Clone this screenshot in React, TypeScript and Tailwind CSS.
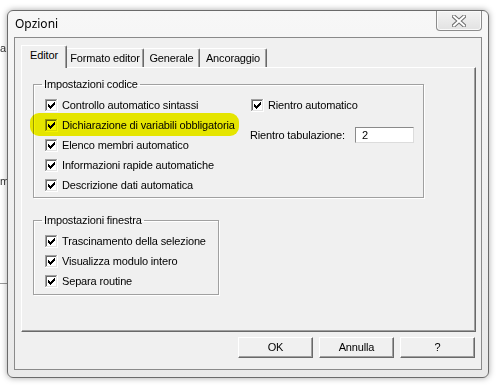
import React from "react"

const ui = "font-['Liberation_Sans',Arial,sans-serif] text-[11px] leading-[13px] tracking-[-0.15px] text-black"

// classic sunken checkbox, always ticked
function Check() {
  const starts = [2, 3, 4, 3, 2, 1, 0]
  return (
    <svg width="13" height="13" viewBox="0 0 13 13" className="shrink-0">
      <rect x="0" y="0" width="13" height="13" fill="#fff" />
      <path d="M0 0h12v1H1v11H0z" fill="#a0a0a0" />
      <path d="M1 1h10v1H2v9H1z" fill="#696969" />
      <path d="M11 1h1v11H1v-1h10z" fill="#e3e3e3" />
      <path d="M12 0h1v13H0v-1h12z" fill="#fff" />
      {starts.map((s, c) => (
        <rect key={c} x={3 + c} y={3 + s} width="1" height="3" fill="#000" />
      ))}
    </svg>
  )
}

function CheckRow({ label, mark }: { label: string; mark?: boolean }) {
  return (
    <div className="relative flex items-center gap-[4px] h-[20px]">
      <Check />
      <span className="whitespace-nowrap">{label}</span>
      {mark && (
        <span className="pointer-events-none absolute -left-[15px] -top-[2px] w-[209px] h-[23px] rounded-[9px] bg-[#f4f400] mix-blend-multiply" />
      )}
    </div>
  )
}

function Group({ title, className, children }: { title: string; className?: string; children: React.ReactNode }) {
  return (
    <fieldset
      className={`border border-[#a0a0a0] shadow-[inset_1px_1px_0_#fff,1px_1px_0_#fff] pl-[11px] ${className ?? ""}`}
    >
      <legend className="ml-[-3px] px-[2px]">{title}</legend>
      {children}
    </fieldset>
  )
}

function Button({ children }: { children: React.ReactNode }) {
  return (
    <div className="w-[75px] h-[21px] flex items-center justify-center bg-[#f0f0f0] border-t border-l border-t-white border-l-white border-r border-b border-r-[#696969] border-b-[#696969] shadow-[inset_-1px_-1px_0_#a0a0a0]">
      {children}
    </div>
  )
}

function Tab({ label, width, active }: { label: string; width: string; active?: boolean }) {
  if (active) {
    return (
      <div
        className={`${width} relative z-10 -mb-[1px] h-[23px] pb-[3px] flex items-center justify-center bg-[#f0f0f0] border-t border-l border-t-white border-l-white border-r border-r-[#696969] shadow-[inset_-1px_0_0_#a0a0a0] rounded-tr-[2px]`}
      >
        {label}
      </div>
    )
  }
  return (
    <div
      className={`${width} h-[19px] flex items-center justify-center bg-[#f0f0f0] border-t border-t-white border-r border-r-[#696969] shadow-[inset_-1px_0_0_#a0a0a0] rounded-tr-[2px]`}
    >
      {label}
    </div>
  )
}

export default function App() {
  return (
    <div className={`${ui} relative w-[497px] h-[389px] overflow-hidden bg-white pl-[7px] pt-[10px]`}>
      {/* desktop behind the dialog */}
      <span className="absolute left-0 top-[42px] text-[#333]">a.</span>
      <span className="absolute left-0 top-[175px] text-[#333]">m</span>
      <div className="absolute left-0 top-[283px] w-[8px] h-[1px] bg-[#9a9a9a]" />

      {/* window */}
      <div className="relative flex flex-col w-[482px] h-[368px] rounded-[6px] border border-[#6a6a6a] bg-gradient-to-b from-[#f7f7f7] to-[#e9e9e9] shadow-[0_0_6px_rgba(0,0,0,0.35)]">
        {/* title bar */}
        <div className="flex h-[26px] items-start">
          <span className="pl-[7px] pt-[5px] font-['Noto_Sans',sans-serif] text-[12px] leading-[16px] tracking-normal">Opzioni</span>
          <div className="ml-auto mr-[6px] w-[46px] h-[20px] flex items-center justify-center rounded-b-[4px] border border-t-0 border-[#8c8c8c] bg-gradient-to-b from-[#f3f3f3] to-[#e2e2e2] shadow-[inset_0_0_0_1px_#fafafa]">
            <svg width="14" height="12" viewBox="0 0 14 12">
              <path d="M2 1.5L12 10.5M12 1.5L2 10.5" stroke="#6d6d6d" strokeWidth="4" strokeLinecap="square" />
              <path d="M2 1.5L12 10.5M12 1.5L2 10.5" stroke="#ffffff" strokeWidth="2" strokeLinecap="square" />
            </svg>
          </div>
        </div>

        {/* client area */}
        <div className="mx-[6px] h-[333px] border border-[#8a8a8a] bg-[#f0f0f0] flex flex-col pl-[6px] pr-[5px] pt-[7px]">
          <div className="flex items-end h-[22px]">
            <Tab label="Editor" width="w-[46px]" active />
            <Tab label="Formato editor" width="w-[77px]" />
            <Tab label="Generale" width="w-[56px]" />
            <Tab label="Ancoraggio" width="w-[67px]" />
          </div>

          <div className="h-[265px] border-t border-l border-t-white border-l-white border-r border-b border-r-[#696969] border-b-[#696969] shadow-[inset_-1px_-1px_0_#a0a0a0] pl-[11px] pt-[10px]">
            <Group title="Impostazioni codice" className="w-[391px] pb-[2px]">
              <div className="flex pt-[4px]">
                <div className="w-[205px] flex flex-col">
                  <CheckRow label="Controllo automatico sintassi" />
                  <CheckRow label="Dichiarazione di variabili obbligatoria" mark />
                  <CheckRow label="Elenco membri automatico" />
                  <CheckRow label="Informazioni rapide automatiche" />
                  <CheckRow label="Descrizione dati automatica" />
                </div>
                <div className="flex flex-col pl-[1px]">
                  <CheckRow label="Rientro automatico" />
                  <div className="flex items-center mt-[12px] -ml-[1px]">
                    <span className="w-[105px] whitespace-nowrap">Rientro tabulazione:</span>
                    <div className="w-[59px] h-[16px] bg-white border-t border-l border-t-[#8a8a8a] border-l-[#8a8a8a] border-r border-b border-r-[#dcdcdc] border-b-[#dcdcdc] pl-[6px] flex items-center">
                      2
                    </div>
                  </div>
                </div>
              </div>
            </Group>

            <Group title="Impostazioni finestra" className="w-[186px] mt-[16px] pb-[3px]">
              <div className="flex flex-col pt-[4px]">
                <CheckRow label="Trascinamento della selezione" />
                <CheckRow label="Visualizza modulo intero" />
                <CheckRow label="Separa routine" />
              </div>
            </Group>
          </div>

          <div className="flex justify-end gap-[6px] mt-[5px] pr-[1px]">
            <Button>OK</Button>
            <Button>Annulla</Button>
            <Button>?</Button>
          </div>
        </div>
      </div>
    </div>
  )
}
